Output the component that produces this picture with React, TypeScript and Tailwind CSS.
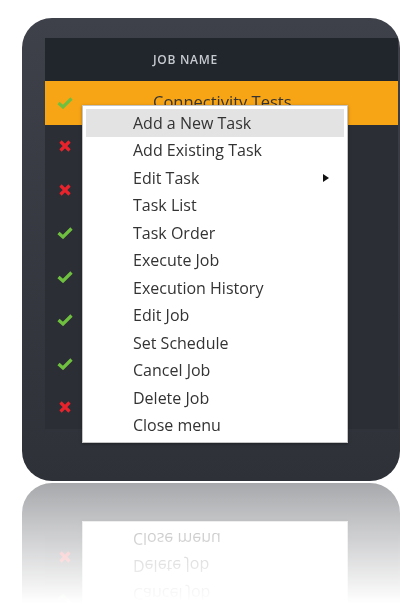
import React from 'react';

type Job = { id: number; ok: boolean; name: string };

// only the selected row's name is visible; the others sit under the open menu
const jobs: Job[] = [
  { id: 1, ok: true, name: 'Connectivity Tests' },
  { id: 2, ok: false, name: '' },
  { id: 3, ok: false, name: '' },
  { id: 4, ok: true, name: '' },
  { id: 5, ok: true, name: '' },
  { id: 6, ok: true, name: '' },
  { id: 7, ok: true, name: '' },
  { id: 8, ok: false, name: '' },
];

const menuItems = [
  'Add a New Task',
  'Add Existing Task',
  'Edit Task',
  'Task List',
  'Task Order',
  'Execute Job',
  'Execution History',
  'Edit Job',
  'Set Schedule',
  'Cancel Job',
  'Delete Job',
  'Close menu',
];

const Check = () => (
  <svg width="16" height="12" viewBox="0 0 16 12">
    <path d="M1.5 6 L6 10 L14.5 1.5" fill="none" stroke="#70c040" strokeWidth="3.2" />
  </svg>
);

const Cross = () => (
  <svg width="12" height="12" viewBox="0 0 12 12">
    <path d="M1.5 1.5 L10.5 10.5 M10.5 1.5 L1.5 10.5" fill="none" stroke="#e8232b" strokeWidth="3.2" />
  </svg>
);

export default function App() {
  return (
    <div className="w-[420px] h-[615px] bg-white overflow-hidden font-['Open_Sans',sans-serif]">
      <div className="pt-[18px] pl-[22px]">
        <div className="relative w-[378px] h-[463px] rounded-[30px] overflow-hidden bg-gradient-to-b from-[#3e4149] to-[#2e3138] pt-[20px] pl-[23px] pr-[2px] [-webkit-box-reflect:below_2px_linear-gradient(transparent_74%,rgba(255,255,255,0.42))]">
          {/* table */}
          <div className="flex flex-col bg-[#2b2e35]">
            <div className="h-[43px] bg-[#21262c] flex items-center pl-[108px]">
              <span className="text-[12px] font-semibold tracking-[0.06em] text-[#c6cad0]">JOB NAME</span>
            </div>
            {jobs.map((job, i) => (
              <div
                key={job.id}
                className={`h-[43.5px] flex items-center ${i === 0 ? 'bg-[#f8a515]' : ''}`}
              >
                <div className="w-[40px] flex justify-center">{job.ok ? <Check /> : <Cross />}</div>
                {job.name && <span className="pl-[68px] text-[16.5px] text-[#333]">{job.name}</span>}
              </div>
            ))}
          </div>

          {/* context menu */}
          <div className="absolute left-[60px] top-[87px] w-[266px] bg-white border border-[#c4c4c4] shadow-[0_1px_3px_rgba(0,0,0,0.35)] p-[3px]">
            {menuItems.map((item, i) => (
              <div
                key={item}
                className={`h-[27.5px] flex items-center justify-between pl-[47px] pr-[15px] text-[16px] text-[#333] ${
                  i === 0 ? 'bg-[#e3e3e3]' : ''
                }`}
              >
                <span>{item}</span>
                {item === 'Edit Task' && (
                  <svg width="6" height="8" viewBox="0 0 6 8">
                    <path d="M0 0 L6 4 L0 8 Z" fill="#111" />
                  </svg>
                )}
              </div>
            ))}
          </div>
        </div>
      </div>
    </div>
  );
}
